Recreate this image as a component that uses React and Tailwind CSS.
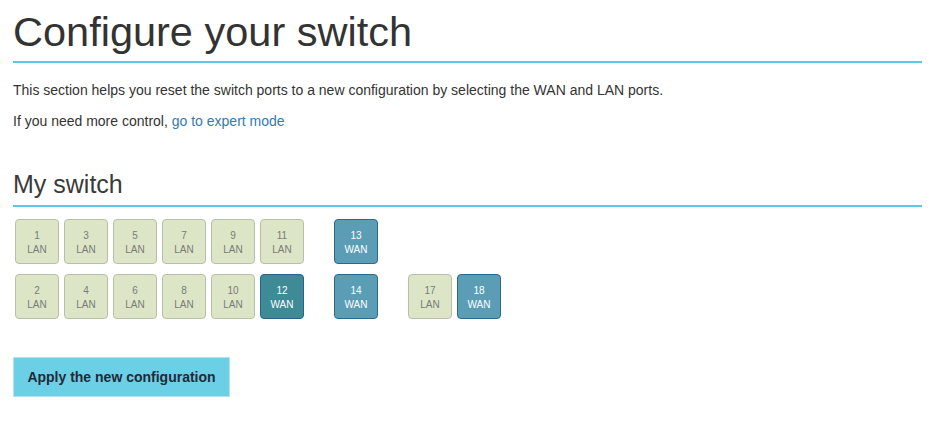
const rowTop = [
  { n: 1, t: "LAN" },
  { n: 3, t: "LAN" },
  { n: 5, t: "LAN" },
  { n: 7, t: "LAN" },
  { n: 9, t: "LAN" },
  { n: 11, t: "LAN" },
];
const rowBottom = [
  { n: 2, t: "LAN" },
  { n: 4, t: "LAN" },
  { n: 6, t: "LAN" },
  { n: 8, t: "LAN" },
  { n: 10, t: "LAN" },
  { n: 12, t: "WAN", dark: true },
];

function Port({ n, t, dark }) {
  let cls = "bg-[#dce6c6] border-[#b8c0aa] text-[#7a7a7a]";
  if (t === "WAN") cls = "bg-[#5b9db5] border-[#2c6a8b] text-white";
  if (dark) cls = "bg-[#3e8a96] border-[#28648a] text-white";
  return (
    <div
      className={`w-[44px] h-[45px] rounded-[4px] border flex flex-col items-center justify-center pt-[2px] text-[10px] leading-[14px] ${cls}`}
    >
      <span>{n}</span>
      <span>{t}</span>
    </div>
  );
}

export default function App() {
  return (
    <div
      className="bg-white text-[#333] pl-[13px] pr-[11px]"
      style={{ fontFamily: '"Liberation Sans", Arial, sans-serif' }}
    >
      <h1 className="mt-[8px] text-[41.5px] leading-[47px] pb-[6px] border-b-2 border-[#5bc8e6]">
        Configure your switch
      </h1>
      <p className="mt-[17px] text-[14px] leading-[20px]">
        This section helps you reset the switch ports to a new configuration by selecting the WAN and LAN ports.
      </p>
      <p className="mt-[11px] text-[14px] leading-[20px]">
        If you need more control,{" "}
        <a href="#" className="text-[#337ab7]">
          go to expert mode
        </a>
      </p>

      <h2 className="mt-[38px] text-[25px] leading-[30px] pb-[6px] border-b-2 border-[#5bc8e6] text-[#3a3a3a]">
        My switch
      </h2>

      <div className="mt-[12px] ml-[2px] flex gap-[30px]">
        <div className="flex flex-col gap-[10px]">
          <div className="flex gap-[5px]">
            {rowTop.map((p) => (
              <Port key={p.n} {...p} />
            ))}
          </div>
          <div className="flex gap-[5px]">
            {rowBottom.map((p) => (
              <Port key={p.n} {...p} />
            ))}
          </div>
        </div>
        <div className="flex flex-col gap-[10px]">
          <Port n={13} t="WAN" />
          <Port n={14} t="WAN" />
        </div>
        <div className="flex flex-col gap-[10px]">
          <div className="h-[45px]" />
          <div className="flex gap-[5px]">
            <Port n={17} t="LAN" />
            <Port n={18} t="WAN" />
          </div>
        </div>
      </div>

      <button className="mt-[38px] w-[217px] h-[40px] bg-[#6bcfe5] border border-[#b0e4f1] text-[14px] font-bold text-[#1f2a3a]">
        Apply the new configuration
      </button>
    </div>
  );
}
